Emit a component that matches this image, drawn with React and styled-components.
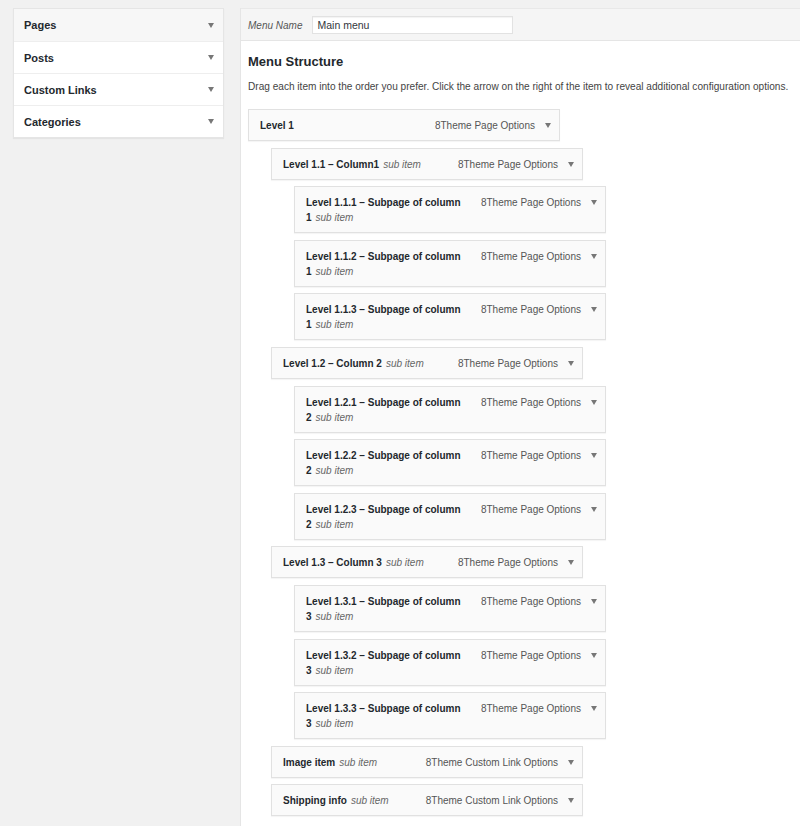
import React from "react";
import styled, { createGlobalStyle } from "styled-components";

const Global = createGlobalStyle`
  html, body { margin: 0; padding: 0; overflow: hidden; }
  body {
    background: #f1f1f1;
    font-family: "Liberation Sans", Arial, sans-serif;
    color: #23282d;
  }
`;

const Page = styled.div`
  display: flex;
  align-items: flex-start;
  padding: 8px 0 0 13px;
  gap: 16px;
  height: 818px;
`;

const Accordion = styled.div`
  width: 211px;
  flex: none;
  background: #fff;
  border: 1px solid #e5e5e5;
  box-shadow: 0 1px 1px rgba(0, 0, 0, 0.05);
  box-sizing: border-box;
`;

const AccRow = styled.div`
  display: flex;
  align-items: center;
  justify-content: space-between;
  height: 32px;
  box-sizing: border-box;
  padding: 0 9px 0 10px;
  font-size: 11px;
  font-weight: bold;
  color: #23282d;
  background: ${(p) => (p.$active ? "#f7f7f7" : "#fff")};
  border-top: ${(p) => (p.$first ? "none" : "1px solid #eeeeee")};
`;

const Arrow = styled.span`
  display: inline-block;
  width: 0;
  height: 0;
  border-left: 3px solid transparent;
  border-right: 3px solid transparent;
  border-top: 5px solid #777;
`;

const Panel = styled.div`
  flex: 1;
  align-self: stretch;
  display: flex;
  flex-direction: column;
  background: #fff;
  border-left: 1px solid #e5e5e5;
`;

const Header = styled.div`
  display: flex;
  align-items: center;
  gap: 10px;
  height: 33px;
  box-sizing: border-box;
  padding: 1px 7px 0;
  background: #f5f5f5;
  border-top: 1px solid #e8e8e8;
  border-bottom: 1px solid #e5e5e5;
`;

const Label = styled.span`
  font-style: italic;
  font-size: 10px;
  color: #555;
`;

const NameInput = styled.div`
  width: 201px;
  height: 18px;
  box-sizing: border-box;
  display: flex;
  align-items: center;
  padding: 0 4px;
  background: #fff;
  border: 1px solid #e2e2e2;
  box-shadow: inset 0 1px 1px rgba(0, 0, 0, 0.05);
  font-size: 10.5px;
  color: #32373c;
`;

const Body = styled.div`
  padding: 12px 7px 0;
`;

const Title = styled.h3`
  margin: 0;
  font-size: 13px;
  line-height: 18px;
  font-weight: bold;
  color: #23282d;
`;

const Desc = styled.p`
  margin: 8px 0 0;
  font-size: 10.1px;
  line-height: 15px;
  color: #444;
  white-space: nowrap;
`;

const List = styled.div`
  margin-top: 15px;
  display: flex;
  flex-direction: column;
  gap: 6.6px;
`;

const Item = styled.div`
  width: 312px;
  box-sizing: border-box;
  margin-left: ${(p) => p.$level * 23}px;
  display: flex;
  align-items: flex-start;
  padding: 8px 8px 7px 11px;
  border: 1px solid #e1e1e1;
  background: #fafafa;
  box-shadow: 0 1px 1px rgba(0, 0, 0, 0.04);
  font-size: 10px;
  line-height: 15px;
`;

const ItemTitle = styled.div`
  flex: 1 1 auto;
  max-width: 158px;
  font-weight: bold;
  color: #23282d;
`;

const Sub = styled.span`
  font-weight: normal;
  font-style: italic;
  color: #666;
  margin-left: 4px;
`;

const Controls = styled.div`
  margin-left: auto;
  flex: none;
  display: flex;
  align-items: center;
  gap: 10px;
  height: 15px;
  color: #555;
`;

const leftRows = ["Pages", "Posts", "Custom Links", "Categories"];

const PO = "8Theme Page Options";
const CL = "8Theme Custom Link Options";

const items = [
  { level: 0, title: "Level 1", type: PO },
  { level: 1, title: "Level 1.1 – Column1", sub: true, type: PO },
  { level: 2, title: "Level 1.1.1 – Subpage of column 1", sub: true, type: PO },
  { level: 2, title: "Level 1.1.2 – Subpage of column 1", sub: true, type: PO },
  { level: 2, title: "Level 1.1.3 – Subpage of column 1", sub: true, type: PO },
  { level: 1, title: "Level 1.2 – Column 2", sub: true, type: PO },
  { level: 2, title: "Level 1.2.1 – Subpage of column 2", sub: true, type: PO },
  { level: 2, title: "Level 1.2.2 – Subpage of column 2", sub: true, type: PO },
  { level: 2, title: "Level 1.2.3 – Subpage of column 2", sub: true, type: PO },
  { level: 1, title: "Level 1.3 – Column 3", sub: true, type: PO },
  { level: 2, title: "Level 1.3.1 – Subpage of column 3", sub: true, type: PO },
  { level: 2, title: "Level 1.3.2 – Subpage of column 3", sub: true, type: PO },
  { level: 2, title: "Level 1.3.3 – Subpage of column 3", sub: true, type: PO },
  { level: 1, title: "Image item", sub: true, type: CL },
  { level: 1, title: "Shipping info", sub: true, type: CL },
];

export default function App() {
  return (
    <>
      <Global />
      <Page>
        <Accordion>
          {leftRows.map((r, i) => (
            <AccRow key={r} $first={i === 0} $active={i === 0}>
              <span>{r}</span>
              <Arrow />
            </AccRow>
          ))}
        </Accordion>
        <Panel>
          <Header>
            <Label>Menu Name</Label>
            <NameInput>Main menu</NameInput>
          </Header>
          <Body>
            <Title>Menu Structure</Title>
            <Desc>
              Drag each item into the order you prefer. Click the arrow on the right of the item to reveal additional configuration options.
            </Desc>
            <List>
              {items.map((it) => (
                <Item key={it.title} $level={it.level}>
                  <ItemTitle>
                    {it.title}
                    {it.sub && <Sub>sub item</Sub>}
                  </ItemTitle>
                  <Controls>
                    <span>{it.type}</span>
                    <Arrow />
                  </Controls>
                </Item>
              ))}
            </List>
          </Body>
        </Panel>
      </Page>
    </>
  );
}
